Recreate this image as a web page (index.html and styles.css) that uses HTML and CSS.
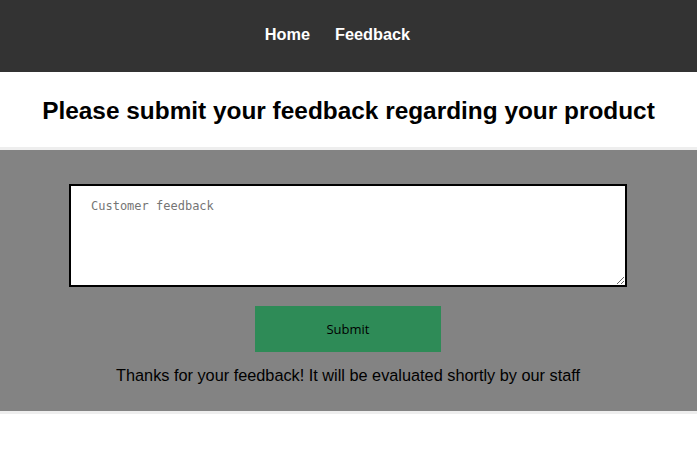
FILE: index.html
```html
<!DOCTYPE html>
<html>
<head>
<meta charset="utf-8">
<link rel="stylesheet" href="styles.css">
</head>
<body>
<nav class="topnav">
  <a class="nav-link" href="#">Home</a>
  <a class="nav-link" href="#">Feedback</a>
</nav>
<header class="title-wrap">
  <h1 class="title">Please submit your feedback regarding your product</h1>
</header>
<section class="feedback">
  <textarea class="feedback-input" placeholder="Customer feedback"></textarea>
  <button class="submit-btn" type="button">Submit</button>
  <p class="thanks">Thanks for your feedback! It will be evaluated shortly by our staff</p>
</section>
</body>
</html>
```
FILE: styles.css
```css
html, body {
  margin: 0;
  padding: 0;
  background: #fff;
  font-family: "Liberation Sans", Arial, sans-serif;
}
.topnav {
  height: 72px;
  background: #333333;
  display: flex;
  justify-content: center;
  align-items: center;
  gap: 25px;
  padding-right: 22px;
}
.nav-link {
  color: #fff;
  text-decoration: none;
  font-weight: bold;
  font-size: 16.3px;
  margin-top: -3px;
}
.title-wrap {
  height: 75px;
  display: flex;
  align-items: center;
  justify-content: center;
}
.title {
  margin: 0;
  font-size: 24.4px;
  font-weight: bold;
  color: #000;
  padding-top: 2px;
}
.feedback {
  background: #838383;
  border-top: 3px solid #eeeeee;
  border-bottom: 3px solid #eeeeee;
  display: flex;
  flex-direction: column;
  align-items: center;
  padding-top: 34px;
  padding-right: 1px;
  box-sizing: border-box;
  height: 267px;
}
.feedback-input {
  width: 558px;
  height: 103px;
  box-sizing: border-box;
  border: 2px solid #000;
  padding: 13px 20px;
  font-family: "DejaVu Sans Mono", monospace;
  font-size: 12px;
  resize: both;
  margin: 0;
  outline: none;
}
.feedback-input::placeholder {
  color: #757575;
}
.submit-btn {
  margin-top: 19px;
  width: 186px;
  height: 46px;
  background: #2e8b57;
  border: none;
  color: #000;
  font-family: "Open Sans", "Noto Sans", sans-serif;
  font-size: 13px;
}
.thanks {
  margin: 14px 0 0;
  font-size: 16.3px;
  color: #000;
}
```
